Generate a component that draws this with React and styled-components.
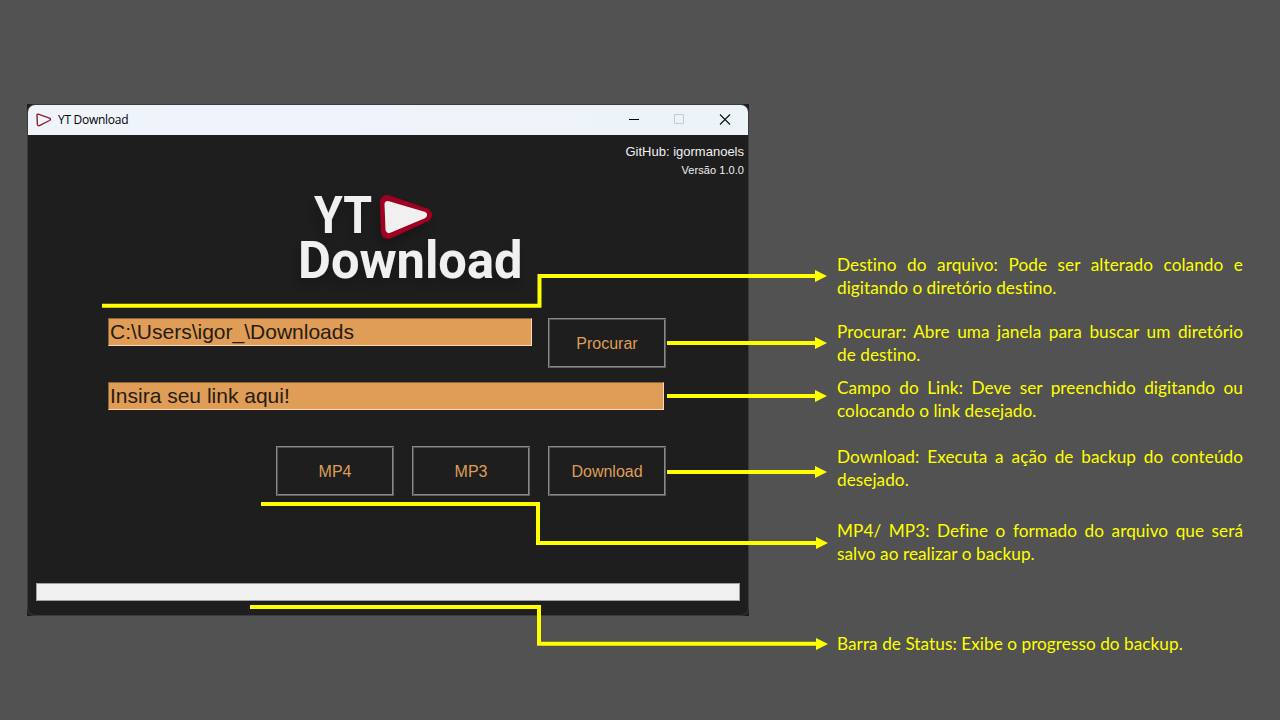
import React from 'react';
import styled, { createGlobalStyle } from 'styled-components';

const GlobalStyle = createGlobalStyle`
  * { box-sizing: border-box; }
  body { margin: 0; background: #525252; overflow: hidden; }
`;

const Slide = styled.main`
  position: relative;
  display: flex;
  width: 1280px;
  height: 720px;
  background: #525252;
`;

const WindowFrame = styled.section`
  width: 722px;
  height: 512px;
  margin: 104px 0 0 27px;
  background: #1e1e1e;
`;

const AppWindow = styled.div`
  display: flex;
  flex-direction: column;
  width: 722px;
  height: 512px;
  border: 1px solid #3c3c3c;
  border-radius: 8px;
  overflow: hidden;
  background: #1e1e1e;
  font-family: 'Liberation Sans', Arial, sans-serif;
`;

const TitleBar = styled.header`
  display: flex;
  align-items: center;
  height: 30px;
  padding: 0 17px 0 8px;
  background: linear-gradient(90deg, #eff3fa, #eff3fb 45%, #ecf4f8);
`;

const Title = styled.span`
  flex: 1;
  margin-left: 6px;
  font: 12px/16px 'Open Sans', 'Noto Sans', sans-serif;
  letter-spacing: -0.28px;
  color: #000;
`;

const Controls = styled.div`
  display: flex;
  gap: 34px;
`;

const Body = styled.div`
  flex: 1;
  display: flex;
  flex-direction: column;
`;

const Credits = styled.div`
  display: flex;
  flex-direction: column;
  align-items: flex-end;
  height: 49px;
  padding: 8px 4px 0 0;
  color: #f0f0f0;
`;

const Author = styled.span`
  font-size: 13px;
  line-height: 18px;
`;

const Version = styled.span`
  font-size: 11px;
  line-height: 18px;
  letter-spacing: 0.06px;
`;

const Brand = styled.div`
  height: 134px;
  padding: 0 0 0 262px;
`;

const LogoArt = styled.svg`
  display: block;
`;

const Form = styled.div`
  display: flex;
  flex-direction: column;
  width: 558px;
  height: 178px;
  margin-left: 80px;
`;

const PathRow = styled.div`
  display: flex;
  align-items: flex-start;
  gap: 16px;
  height: 64px;
`;

const Field = styled.div`
  width: ${(p) => p.$width}px;
  height: 28px;
  padding-left: 1px;
  border: 1px solid;
  border-color: #8c6238 #fbd9b4 #fbd9b4 #8c6238;
  background: #df9d58;
  color: #261c12;
  font-size: 21px;
  line-height: 26px;
  white-space: nowrap;
`;

const Actions = styled.div`
  display: flex;
  justify-content: flex-end;
  gap: 18px;
  margin-top: 36px;
`;

const Button = styled.button`
  width: 118px;
  height: 50px;
  padding: 2px 0 0;
  border: 1px solid;
  border-color: #8a8a8a #606060 #606060 #8a8a8a;
  box-shadow: inset 1px 1px #505050, inset -1px -1px #8a8a8a;
  background: #1e1e1e;
  color: #df9d58;
  font: 16px/20px 'Liberation Sans', Arial, sans-serif;
`;

const Progress = styled.div`
  height: 18px;
  margin: 87px 8px 0;
  border: 1px solid #a0a0a0;
  background: #f0f0f0;
`;

const Notes = styled.aside`
  display: flex;
  flex-direction: column;
  width: 406px;
  margin-left: 88px;
  padding-top: 253px;
`;

const Note = styled.p`
  margin: 0 0 ${(p) => p.$after}px;
  color: #ffff00;
  font: 17.2px/23px Lato, 'Open Sans', sans-serif;
  font-variant-ligatures: none;
  letter-spacing: 0.05px;
`;

const Line = styled.span`
  display: block;
  white-space: nowrap;
  text-align-last: ${(p) => (p.$full ? 'justify' : 'left')};
`;

const Overlay = styled.svg`
  position: absolute;
  inset: 0;
  pointer-events: none;
`;

const notes = [
  { after: 21, lines: ['Destino do arquivo: Pode ser alterado colando e', 'digitando o diretório destino.'] },
  { after: 10, lines: ['Procurar: Abre uma janela para buscar um diretório', 'de destino.'] },
  { after: 23, lines: ['Campo do Link: Deve ser preenchido digitando ou', 'colocando o link desejado.'] },
  { after: 28, lines: ['Download: Executa a ação de backup do conteúdo', 'desejado.'] },
  { after: 67, lines: ['MP4/ MP3: Define o formado do arquivo que será', 'salvo ao realizar o backup.'] },
  { after: 0, lines: ['Barra de Status: Exibe o progresso do backup.'] },
];

const connectors = [
  { d: 'M102 305.7H539.5V276H816', x: 827, y: 276 },
  { d: 'M667 343H816', x: 827, y: 343 },
  { d: 'M667 396H816', x: 827, y: 396 },
  { d: 'M667 472H816', x: 827, y: 472 },
  { d: 'M261 504H538V543H816', x: 828, y: 543 },
  { d: 'M250 607H539V643.7H817', x: 828, y: 644 },
];

function Logo() {
  return (
    <LogoArt width="250" height="110" viewBox="290 184 250 110">
      <defs>
        <filter id="soft" x="-20%" y="-20%" width="140%" height="150%">
          <feDropShadow dx="-3" dy="7" stdDeviation="7" floodColor="#000" floodOpacity="0.3" />
        </filter>
      </defs>
      <g filter="url(#soft)" fill="#f0f0f0" fontFamily="Roboto, sans-serif" fontWeight="700">
        <text x="314" y="233.3" fontSize="51.5" textLength="58" lengthAdjust="spacingAndGlyphs">YT</text>
        <text x="298" y="277.6" fontSize="51.5" textLength="224.5" lengthAdjust="spacingAndGlyphs">Download</text>
        <path d="M387 202L425 215L388 232Z" fill="#a00020" stroke="#a00020" strokeWidth="14" strokeLinejoin="round" />
        <path d="M388 204.5L423.5 215L389 229.5Z" stroke="#f0f0f0" strokeWidth="7" strokeLinejoin="round" />
      </g>
    </LogoArt>
  );
}

export default function App() {
  return (
    <Slide>
      <GlobalStyle />
      <WindowFrame>
        <AppWindow>
          <TitleBar>
            <svg width="16" height="14" viewBox="0 0 16 14" fill="none">
              <path d="M2.2 1.2L13.5 5.1Q15.5 6.2 13.5 7.5L3.4 12.6Q1.6 13 1.4 11.4L1 2.2Q1 1 2.2 1.2Z" stroke="#8e1d30" strokeWidth="1.4" strokeLinejoin="round" />
            </svg>
            <Title>YT Download</Title>
            <Controls>
              <svg width="12" height="12"><path d="M2 5.5H12" stroke="#000" /></svg>
              <svg width="12" height="12"><rect x="1.5" y="0.5" width="9" height="9" rx="0.5" fill="none" stroke="#c5cacd" /></svg>
              <svg width="12" height="12"><path d="M1 0.5L11 10.5M11 0.5L1 10.5" stroke="#111" strokeWidth="1.1" /></svg>
            </Controls>
          </TitleBar>
          <Body>
            <Credits>
              <Author>GitHub: igormanoels</Author>
              <Version>Versão 1.0.0</Version>
            </Credits>
            <Brand><Logo /></Brand>
            <Form>
              <PathRow>
                <Field $width={424}>C:\Users\igor_\Downloads</Field>
                <Button>Procurar</Button>
              </PathRow>
              <Field $width={556}>Insira seu link aqui!</Field>
              <Actions>
                <Button>MP4</Button>
                <Button>MP3</Button>
                <Button>Download</Button>
              </Actions>
            </Form>
            <Progress />
          </Body>
        </AppWindow>
      </WindowFrame>
      <Notes>
        {notes.map((note) => (
          <Note key={note.lines[0]} $after={note.after}>
            {note.lines.map((line, i) => (
              <Line key={line} $full={i === 0 && note.lines.length > 1}>{line}</Line>
            ))}
          </Note>
        ))}
      </Notes>
      <Overlay width="1280" height="720" viewBox="0 0 1280 720">
        {connectors.map(({ d, x, y }) => (
          <g key={d}>
            <path d={d} fill="none" stroke="#ffff00" strokeWidth="4" />
            <path d={`M${x - 12} ${y - 6}L${x} ${y}L${x - 12} ${y + 6}Z`} fill="#ffff00" />
          </g>
        ))}
      </Overlay>
    </Slide>
  );
}
